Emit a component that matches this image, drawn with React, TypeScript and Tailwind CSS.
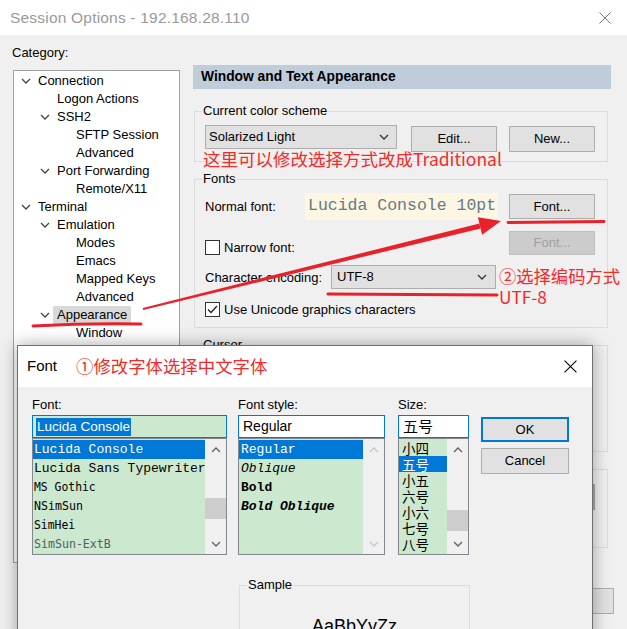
import React from "react";

const ui = "font-['Liberation_Sans','Noto_Sans_CJK_SC',sans-serif]";
const cjk = "font-['Noto_Sans_CJK_SC','Liberation_Sans',sans-serif]";
const mono = "font-['Liberation_Mono','Noto_Sans_CJK_SC',monospace]";
const bitmapMono = "font-['DejaVu_Sans_Mono',monospace]";

type Node = { label: string; level: number; open?: boolean; selected?: boolean };

const tree: Node[] = [
  { label: "Connection", level: 0, open: true },
  { label: "Logon Actions", level: 1 },
  { label: "SSH2", level: 1, open: true },
  { label: "SFTP Session", level: 2 },
  { label: "Advanced", level: 2 },
  { label: "Port Forwarding", level: 1, open: true },
  { label: "Remote/X11", level: 2 },
  { label: "Terminal", level: 0, open: true },
  { label: "Emulation", level: 1, open: true },
  { label: "Modes", level: 2 },
  { label: "Emacs", level: 2 },
  { label: "Mapped Keys", level: 2 },
  { label: "Advanced", level: 2 },
  { label: "Appearance", level: 1, open: true, selected: true },
  { label: "Window", level: 2 },
];

const branchPad = ["pl-[7px]", "pl-[26px]", "pl-[45px]"];
const leafPad = ["pl-[24px]", "pl-[43px]", "pl-[62px]"];

function Chevron({ up = false, className = "" }: { up?: boolean; className?: string }) {
  return (
    <svg width="10" height="6" viewBox="0 0 10 6" className={className}>
      <path
        d={up ? "M1 5l4-4 4 4" : "M1 1l4 4 4-4"}
        fill="none"
        stroke="currentColor"
        strokeWidth="1.3"
      />
    </svg>
  );
}

function Cross({ size = 12, className = "" }: { size?: number; className?: string }) {
  return (
    <svg width={size} height={size} viewBox="0 0 12 12" className={className}>
      <path d="M0.5 0.5l11 11M11.5 0.5l-11 11" stroke="currentColor" strokeWidth="1" />
    </svg>
  );
}

function Btn({ children, className = "" }: { children: React.ReactNode; className?: string }) {
  return (
    <div
      className={`flex items-center justify-center border border-[#adadad] bg-[#e1e1e1] text-[13px] text-black ${className}`}
    >
      {children}
    </div>
  );
}

function Check({ checked = false }: { checked?: boolean }) {
  return (
    <div className="w-[15px] h-[15px] border border-[#333333] bg-white flex items-center justify-center shrink-0">
      {checked && (
        <svg width="11" height="9" viewBox="0 0 11 9">
          <path d="M1 4.5l3 3 6-6.5" fill="none" stroke="#222" strokeWidth="1.3" />
        </svg>
      )}
    </div>
  );
}

function Scrollbar({ thumbTop, disabled = false }: { thumbTop?: string; disabled?: boolean }) {
  const arrow = disabled ? "text-[#c6c6c6]" : "text-[#606060]";
  return (
    <div className="w-[21px] h-full bg-[#f0f0f0] flex flex-col shrink-0">
      <div className={`h-[21px] flex items-center justify-center ${arrow}`}>
        <Chevron up />
      </div>
      <div className="flex-1">
        {thumbTop && <div className={`${thumbTop} h-[21px] bg-[#cdcdcd]`} />}
      </div>
      <div className={`h-[21px] flex items-center justify-center ${arrow}`}>
        <Chevron />
      </div>
    </div>
  );
}

function MainWindow() {
  return (
    <div className="flex flex-col h-full">
      {/* title bar */}
      <div className="h-[35px] bg-white flex items-center pl-[10px] pr-[16px] shrink-0">
        <span className="text-[15.5px] text-[#9a9a9a] tracking-[0.2px]">Session Options - 192.168.28.110</span>
        <Cross className="ml-auto text-[#777777]" />
      </div>

      <div className="flex pl-[12px] text-[13px]">
        {/* category tree */}
        <div className="w-[168px] pt-[10px]">
          <div className="leading-[16px] mb-[9px]">Category:</div>
          <div className="ml-[1px] w-[167px] h-[493px] border border-[#a0a0a0] bg-white pt-[1px]">
            {tree.map((n, i) => (
              <div
                key={i}
                className={`h-[18px] flex items-center ${n.open ? branchPad[n.level] : leafPad[n.level]}`}
              >
                {n.open && <Chevron className="text-[#444] mr-[7px]" />}
                <span
                  className={`leading-[18px] whitespace-nowrap ${n.selected ? "bg-[#d9d9d9] px-[4px] -ml-[4px]" : ""}`}
                >
                  {n.label}
                </span>
              </div>
            ))}
          </div>
        </div>

        {/* right panel */}
        <div className="ml-[13px] w-[418px] pt-[30px]">
          <div className="h-[24px] bg-[#bfcddb] flex items-center pl-[8px] text-[13.8px] font-bold">
            Window and Text Appearance
          </div>

          <fieldset className="mt-[14px] ml-[1px] w-[414px] border border-[#dcdcdc]">
            <legend className="ml-[7px] px-[1px] leading-[16px]">Current color scheme</legend>
            <div className="pl-[10px] pt-[6px] pb-[9px] flex items-start">
              <div className="w-[192px] h-[24px] border border-[#adadad] bg-[#e1e1e1] flex items-center pl-[3px] pr-[7px]">
                Solarized Light
                <Chevron className="ml-auto text-[#333]" />
              </div>
              <Btn className="ml-[14px] mt-[1px] w-[86px] h-[26px]">Edit...</Btn>
              <Btn className="ml-[12px] mt-[1px] w-[86px] h-[26px]">New...</Btn>
            </div>
          </fieldset>

          <fieldset className="mt-[9px] ml-[1px] w-[414px] border border-[#dcdcdc]">
            <legend className="ml-[7px] px-[1px] leading-[16px]">Fonts</legend>
            <div className="ml-[10px] pt-[6px] pb-[10px] w-[390px]">
              <div className="flex items-center h-[27px]">
                <span className="w-[100px]">Normal font:</span>
                <div className={`w-[193px] h-[27px] bg-[#fdf6e3] flex items-center pl-[3px] text-[16.5px] text-[#657b83] ${mono}`}>
                  Lucida Console 10pt
                </div>
                <Btn className="ml-[11px] w-[86px] h-[25px]">Font...</Btn>
              </div>
              <div className="flex items-start h-[24px] mt-[11px]">
                <div className="flex items-center mt-[7px]">
                  <Check />
                  <span className="ml-[4px]">Narrow font:</span>
                </div>
                <div className="ml-auto w-[86px] h-[24px] border border-[#bfbfbf] bg-[#cccccc] text-[#a0a0a0] flex items-center justify-center">
                  Font...
                </div>
              </div>
              <div className="flex items-center h-[24px] mt-[10px]">
                <span className="w-[126px] pt-[2px] whitespace-nowrap">Character encoding:</span>
                <div className="w-[165px] h-[24px] border border-[#adadad] bg-[#e1e1e1] flex items-center pl-[5px] pr-[8px]">
                  UTF-8
                  <Chevron className="ml-auto text-[#333]" />
                </div>
              </div>
              <div className="flex items-center h-[15px] mt-[13px]">
                <Check checked />
                <span className="ml-[4px]">Use Unicode graphics characters</span>
              </div>
            </div>
          </fieldset>

          <fieldset className="mt-[9px] ml-[1px] w-[414px] h-[115px] border border-[#dcdcdc]">
            <legend className="ml-[7px] px-[1px] leading-[16px]">Cursor</legend>
          </fieldset>

          <div className="mt-[17px] ml-[1px] w-[414px] h-[79px] border border-[#dcdcdc] flex justify-end pr-[12px] pt-[14px]">
            <div className="w-[86px] h-[26px] bg-[#a8a8a8]" />
          </div>

          <div className="mt-[40px] flex justify-end -mr-[3px]">
            <Btn className="w-[86px] h-[26px]">OK</Btn>
          </div>
        </div>
      </div>
    </div>
  );
}

function FontDialog() {
  const fonts = [
    { name: "Lucida Console", cls: `text-[13px] ${mono}`, sel: true },
    { name: "Lucida Sans Typewriter", cls: `text-[13px] ${mono}` },
    { name: "MS Gothic", cls: `text-[11.4px] ${bitmapMono}` },
    { name: "NSimSun", cls: `text-[11.6px] ${bitmapMono}` },
    { name: "SimHei", cls: `text-[11.4px] ${bitmapMono}` },
    { name: "SimSun-ExtB", cls: `text-[11.6px] text-[#4f6066] ${bitmapMono}` },
  ];
  const styles = [
    { name: "Regular", cls: "", sel: true },
    { name: "Oblique", cls: "italic" },
    { name: "Bold", cls: "font-bold" },
    { name: "Bold Oblique", cls: "font-bold italic" },
  ];
  const sizes = ["小四", "五号", "小五", "六号", "小六", "七号", "八号"];

  return (
    <div className="absolute left-[17px] top-[345px] w-[576px] h-[300px] border border-[#707070] bg-[#f0f0f0] shadow-[0_0_16px_rgba(0,0,0,0.35)]">
      <div className="h-[41px] bg-white flex items-center pl-[9px] pr-[15px]">
        <span className="text-[15px]">Font</span>
        <span className={`ml-[19px] text-[17.4px] text-[#f42a2a] ${cjk}`}>①修改字体选择中文字体</span>
        <Cross size={13} className="ml-auto text-black" />
      </div>

      <div className="flex items-start pl-[14px] pt-[11px]">
        {/* Font */}
        <div className="w-[195px]">
          <div className="text-[13px] leading-[14px] mb-[3px]">Font:</div>
          <div className="h-[23px] border border-[#0078d7] bg-[#cce8cf] flex items-center pl-[3px]">
            <span className="bg-[#0078d7] text-white text-[13.5px] leading-[18px] px-[1px]">Lucida Console</span>
          </div>
          <div className="h-[117px] border border-[#828790] bg-[#cce8cf] flex">
            <div className="flex-1 min-w-0 overflow-hidden pt-[1px]">
              {fonts.map((f) => (
                <div
                  key={f.name}
                  className={`h-[19px] flex items-center pl-[1px] whitespace-nowrap ${f.cls} ${f.sel ? "bg-[#0078d7] text-white" : ""}`}
                >
                  {f.name}
                </div>
              ))}
            </div>
            <Scrollbar thumbTop="mt-[38px]" />
          </div>
        </div>

        {/* Font style */}
        <div className="ml-[11px] w-[147px]">
          <div className="text-[13px] leading-[14px] mb-[3px]">Font style:</div>
          <div className="h-[23px] border border-[#0078d7] bg-white flex items-center pl-[4px] text-[14px]">
            Regular
          </div>
          <div className="h-[117px] border border-[#828790] bg-[#cce8cf] flex">
            <div className={`flex-1 min-w-0 pt-[1px] text-[13px] ${mono}`}>
              {styles.map((s) => (
                <div
                  key={s.name}
                  className={`h-[19px] flex items-center pl-[2px] ${s.cls} ${s.sel ? "bg-[#0078d7] text-white" : ""}`}
                >
                  {s.name}
                </div>
              ))}
            </div>
            <Scrollbar disabled />
          </div>
        </div>

        {/* Size */}
        <div className="ml-[13px] w-[71px]">
          <div className="text-[13px] leading-[14px] mb-[3px]">Size:</div>
          <div className={`h-[23px] border border-[#0078d7] bg-white flex items-center pl-[4px] text-[15px] ${cjk}`}>
            五号
          </div>
          <div className="h-[117px] border border-[#828790] bg-[#cce8cf] flex">
            <div className={`flex-1 min-w-0 pt-[1px] text-[13.5px] ${cjk}`}>
              {sizes.map((s, i) => (
                <div
                  key={s}
                  className={`h-[16px] flex items-center pl-[3px] ${i === 1 ? "bg-[#0078d7] text-white" : ""}`}
                >
                  <span className="leading-[14px]">{s}</span>
                </div>
              ))}
            </div>
            <Scrollbar thumbTop="mt-[50px]" />
          </div>
        </div>

        {/* Buttons */}
        <div className="ml-[12px] w-[88px] pt-[19px] text-[13px]">
          <div className="h-[25px] border-2 border-[#0078d7] bg-[#e1e1e1] flex items-center justify-center">OK</div>
          <div className="mt-[6px] h-[26px] border border-[#adadad] bg-[#e1e1e1] flex items-center justify-center">
            Cancel
          </div>
        </div>
      </div>

      <fieldset className="mt-[22px] ml-[221px] w-[231px] h-[80px] border border-[#dcdcdc]">
        <legend className="ml-[7px] px-[1px] text-[13px] leading-[16px]">Sample</legend>
        <div className="pt-[22px] text-center text-[18px] leading-[22px]">AaBbYyZz</div>
      </fieldset>
    </div>
  );
}

function Annotations() {
  return (
    <>
      <svg className="absolute left-0 top-0 pointer-events-none" width="627" height="629" viewBox="0 0 627 629">
        <path d="M33 326 Q 88 323 141 324" fill="none" stroke="#e8212b" strokeWidth="3" strokeLinecap="round" />
        <polygon points="143.2,310 142.8,308 479.4,223.6 480.6,228.4" fill="#e8212b" />
        <polygon points="501,221 477.9,217.3 482.1,234.7" fill="#e8212b" />
        <path d="M508 222.5 L604 221.5" fill="none" stroke="#e8212b" strokeWidth="3" strokeLinecap="round" />
        <path d="M328 294 L497 295" fill="none" stroke="#e8212b" strokeWidth="3" strokeLinecap="round" />
      </svg>
      <span className={`absolute left-[203px] top-[147px] text-[17.5px] leading-[24px] text-[#f42a2a] ${cjk}`}>
        这里可以修改选择方式改成Traditional
      </span>
      <div className={`absolute left-[499px] top-[265px] text-[17.3px] leading-[21px] text-[#f42a2a] ${cjk}`}>
        <div>②选择编码方式</div>
        <div>UTF-8</div>
      </div>
    </>
  );
}

export default function App() {
  return (
    <div className={`relative w-[627px] h-[629px] overflow-hidden bg-[#f0f0f0] text-black ${ui}`}>
      <MainWindow />
      <Annotations />
      <FontDialog />
    </div>
  );
}
